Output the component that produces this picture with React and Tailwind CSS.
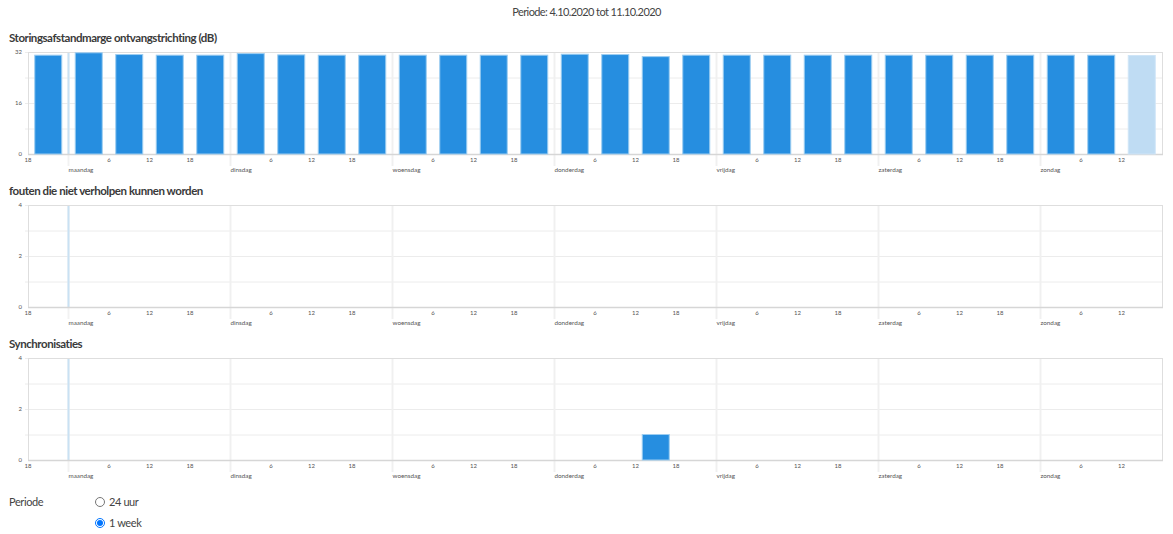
import React from "react";

const PL = 28;
const PR = 1162;
const HOUR = 6.75;
const DAY = 162;
const DAYS = ["maandag", "dinsdag", "woensdag", "donderdag", "vrijdag", "zaterdag", "zondag"];

function Chart({ yMax, yLabels, grid, bars }) {
  const top = 4;
  const bottom = 106;
  const h = bottom - top;
  const y = (v) => bottom - (v / yMax) * h;
  const boundaries = DAYS.map((_, k) => PL + 6 * HOUR + DAY * k);
  const xTicks = [{ x: PL, t: "18" }];
  boundaries.forEach((b, k) => {
    xTicks.push({ x: b + 40.5, t: "6" });
    xTicks.push({ x: b + 81, t: "12" });
    if (k < 6) xTicks.push({ x: b + 121.5, t: "18" });
  });
  return (
    <svg width="1173" height="133" className="block" style={{ fontFamily: "Lato, 'Liberation Sans', sans-serif" }}>
      {grid.map((g) => (
        <line key={g} x1={PL - 3} x2={PR} y1={y(g) + 0.5} y2={y(g) + 0.5} stroke="#ececec" strokeWidth="1" />
      ))}
      {boundaries.slice(1).map((b) => (
        <line key={b} x1={b} x2={b} y1={top} y2={bottom + 12} stroke="#f0f0f0" strokeWidth="2" />
      ))}
      <line x1={boundaries[0]} x2={boundaries[0]} y1={top} y2={bottom + 12} stroke="#f2f2f2" strokeWidth="2" />
      <line x1={boundaries[0]} x2={boundaries[0]} y1={top} y2={bottom} stroke="#c9e1f3" strokeWidth="2" />
      <rect x={PL + 0.5} y={top + 0.5} width={PR - PL} height={h} fill="none" stroke="#dedede" strokeWidth="1" />
      <line x1={PL} x2={PR + 1} y1={bottom + 0.5} y2={bottom + 0.5} stroke="#d6d6d6" strokeWidth="1.5" />
      {bars.map((b) => {
        const cx = PL + 20.25 + 40.5 * b.i;
        const yt = y(b.v);
        return (
          <rect
            key={b.i}
            x={cx - 13.5}
            y={yt}
            width={27}
            height={bottom - yt}
            fill={b.light ? "#bfdcf3" : "#268ee0"}
            stroke={b.light ? "#cfe5f7" : "#9ccdf1"}
            strokeWidth="1"
          />
        );
      })}
      {yLabels.map((l) => (
        <text key={l} x={22} y={y(l) + 2} textAnchor="end" fontSize="6" fill="#555">
          {l}
        </text>
      ))}
      {xTicks.map((t, i) => (
        <text key={i} x={t.x} y={114} textAnchor="middle" fontSize="6" fill="#555">
          {t.t}
        </text>
      ))}
      {DAYS.map((d, k) => (
        <text key={d} x={boundaries[k]} y={124} fontSize="6.3" fill="#555">
          {d}
        </text>
      ))}
    </svg>
  );
}

const snrVals = [31.0, 31.75, 31.2, 31.0, 31.0, 31.5, 31.1, 31.0, 31.0, 31.0, 31.0, 31.0, 31.0, 31.3, 31.2, 30.55, 31.0, 31.0, 31.0, 31.0, 31.0, 31.0, 31.0, 31.0, 31.0, 31.0, 31.0, 30.9];
const snrBars = snrVals.map((v, i) => ({ i, v, light: i === 27 }));

function Section({ title, children }) {
  return (
    <div>
      <div className="h-[20px] pl-[9px] flex items-center text-[11.5px] tracking-[-0.45px] font-bold text-[#3a3a3a]">{title}</div>
      {children}
    </div>
  );
}

export default function App() {
  return (
    <div className="w-[1173px] h-[534px] bg-white overflow-hidden" style={{ fontFamily: "Lato, 'Liberation Sans', sans-serif" }}>
      <div className="h-[28px] pt-[3px] flex justify-center items-start text-[11px] tracking-[-0.6px] text-[#444] leading-[18px]">
        Periode: 4.10.2020 tot 11.10.2020
      </div>
      <Section title="Storingsafstandmarge ontvangstrichting (dB)">
        <Chart yMax={32} yLabels={[32, 16, 0]} grid={[32, 24, 16, 8]} bars={snrBars} />
      </Section>
      <Section title="fouten die niet verholpen kunnen worden">
        <Chart yMax={4} yLabels={[4, 2, 0]} grid={[4, 3, 2, 1]} bars={[]} />
      </Section>
      <Section title="Synchronisaties">
        <Chart yMax={4} yLabels={[4, 2, 0]} grid={[4, 3, 2, 1]} bars={[{ i: 15, v: 1 }]} />
      </Section>
      <div className="flex pl-[9px] pt-[5px] text-[11px] tracking-[-0.4px] text-[#444]">
        <div className="w-[86px] h-[20px] flex items-center">Periode</div>
        <div className="flex flex-col gap-[1px]">
          <label className="h-[20px] flex items-center gap-[4px]">
            <input type="radio" name="periode" className="w-[10px] h-[10px] m-0" />
            <span>24 uur</span>
          </label>
          <label className="h-[20px] flex items-center gap-[4px]">
            <input type="radio" name="periode" defaultChecked className="w-[10px] h-[10px] m-0" />
            <span>1 week</span>
          </label>
        </div>
      </div>
    </div>
  );
}
